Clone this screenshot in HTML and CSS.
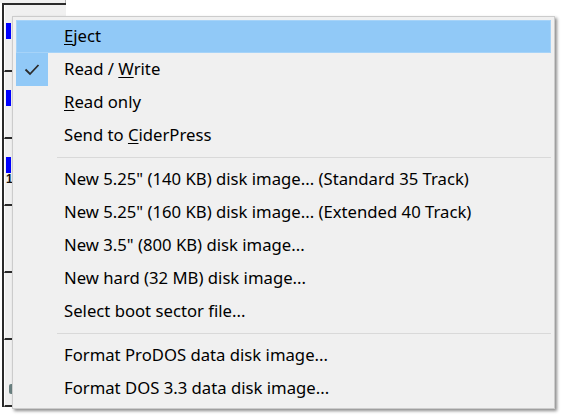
FILE: index.html
```html
<!DOCTYPE html>
<html>
<head>
<meta charset="utf-8">
<link rel="stylesheet" href="styles.css">
</head>
<body>
<div class="desk">
  <div class="topbar"></div>
  <div class="drives">
    <div class="slot"><span class="led"></span></div>
    <div class="slot"><span class="led"></span></div>
    <div class="slot"><span class="led"></span><span class="glyph">1</span></div>
    <div class="slot"></div>
    <div class="slot"></div>
    <div class="slot"><span class="knob"></span></div>
  </div>
  <div class="status"><span class="sbar"></span></div>
</div>

<div class="menu">
  <div class="item hl"><span class="chk"></span><span class="lbl"><u>E</u>ject</span></div>
  <div class="item"><span class="chk on"><svg width="16" height="14" viewBox="0 0 16 14"><polyline points="1.5,6.5 6,11 14.5,2" fill="none" stroke="#2b2b2b" stroke-width="1.8"/></svg></span><span class="lbl">Read / <u>W</u>rite</span></div>
  <div class="item"><span class="chk"></span><span class="lbl"><u>R</u>ead only</span></div>
  <div class="item"><span class="chk"></span><span class="lbl">Send to <u>C</u>iderPress</span></div>
  <div class="sep"></div>
  <div class="item"><span class="chk"></span><span class="lbl">New 5.25" (140 KB) disk image... (Standard 35 Track)</span></div>
  <div class="item"><span class="chk"></span><span class="lbl">New 5.25" (160 KB) disk image... (Extended 40 Track)</span></div>
  <div class="item"><span class="chk"></span><span class="lbl">New 3.5" (800 KB) disk image...</span></div>
  <div class="item"><span class="chk"></span><span class="lbl">New hard (32 MB) disk image...</span></div>
  <div class="item"><span class="chk"></span><span class="lbl">Select boot sector file...</span></div>
  <div class="sep"></div>
  <div class="item"><span class="chk"></span><span class="lbl">Format ProDOS data disk image...</span></div>
  <div class="item"><span class="chk"></span><span class="lbl">Format DOS 3.3 data disk image...</span></div>
</div>
</body>
</html>
```

FILE: styles.css
```css
html, body {
  margin: 0;
  padding: 0;
  background: #ffffff;
  width: 561px;
  height: 415px;
  overflow: hidden;
}

.desk {
  display: flex;
  flex-direction: column;
  width: 66px;
}

.topbar {
  height: 3px;
  background: #f0f0f0;
  border-right: 1px solid #b0b0b0;
}

.drives {
  margin-left: 2px;
  border-left: 2px solid #2a2a2a;
  border-top: 2px solid #2a2a2a;
  background: #f0f0f0;
  display: flex;
  flex-direction: column;
}

.slot {
  height: 67px;
  border-bottom: 2px solid #2a2a2a;
  border-left: 1px solid #ffffff;
  padding-top: 18px;
  box-sizing: border-box;
}

.led {
  display: block;
  width: 5px;
  height: 16px;
  background: #0000ff;
  margin-left: 1px;
}

.glyph {
  display: block;
  font-family: "Liberation Sans", sans-serif;
  font-weight: bold;
  font-size: 12px;
  line-height: 12px;
  margin-left: 1px;
  color: #111;
}

.knob {
  display: block;
  width: 5px;
  height: 10px;
  margin-top: 26px;
  margin-left: 4px;
  background: #6a8080;
  border-radius: 2px;
}

.status {
  height: 12px;
  display: flex;
  align-items: flex-end;
}

.sbar {
  display: block;
  margin-left: 3px;
  width: 66px;
  height: 3px;
  background: linear-gradient(to right, #d8d8d8 0 20px, #9a9a9a 20px);
}

/* popup menu */
.menu {
  position: absolute;
  left: 12px;
  top: 16px;
  width: 543px;
  box-sizing: border-box;
  padding: 3px;
  background: #f0f0f0;
  border: 1px solid #cccccc;
  box-shadow: 2px 2px 3px rgba(0, 0, 0, 0.45);
  font-family: "Noto Sans", "Open Sans", sans-serif;
  font-size: 16.7px;
  color: #000000;
}

.item {
  height: 33px;
  display: flex;
  align-items: center;
}

.item.hl {
  background: #91c9f7;
  box-shadow: inset 0 0 0 1px #a6d3f8;
}

.chk {
  width: 32px;
  height: 33px;
  display: flex;
  align-items: center;
  justify-content: center;
  flex: none;
}

.chk.on {
  background: #91c9f7;
}

.lbl {
  padding-left: 16px;
  white-space: nowrap;
  line-height: 20px;
  margin-top: -2px;
}

.lbl u {
  text-underline-offset: 2px;
}

.sep {
  height: 11px;
  display: flex;
  align-items: center;
  padding-left: 41px;
}

.sep::before {
  content: "";
  display: block;
  flex: 1;
  height: 1px;
  background: #d9d9d9;
}
```
